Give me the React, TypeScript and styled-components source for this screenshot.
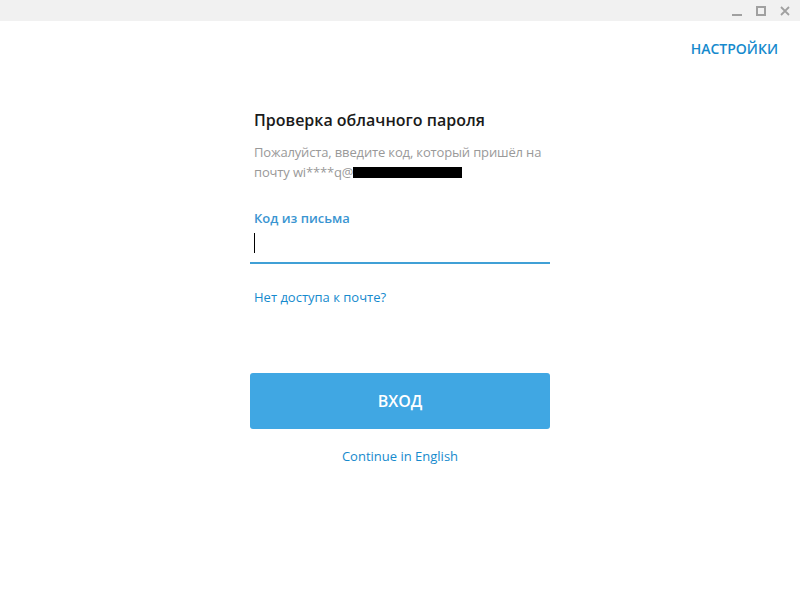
import React from "react";
import styled, { createGlobalStyle } from "styled-components";

const Global = createGlobalStyle`
  html, body {
    margin: 0;
    padding: 0;
    background: #ffffff;
  }
  body {
    font-family: "Open Sans", "Noto Sans", sans-serif;
  }
`;

function App() {
  return (
    <>
      <Global />
      <Window>
        <TitleBar>
          <WinButton aria-label="minimize">
            <svg width="12" height="12" viewBox="0 0 12 12">
              <rect x="1" y="9" width="10" height="2" fill="#a0a0a0" />
            </svg>
          </WinButton>
          <WinButton aria-label="maximize">
            <svg width="12" height="12" viewBox="0 0 12 12">
              <rect x="2" y="2" width="8" height="8" fill="none" stroke="#a0a0a0" strokeWidth="2" />
            </svg>
          </WinButton>
          <WinButton aria-label="close">
            <svg width="12" height="12" viewBox="0 0 12 12">
              <path d="M2 2 L10 10 M10 2 L2 10" stroke="#a0a0a0" strokeWidth="1.8" />
            </svg>
          </WinButton>
        </TitleBar>
        <TopBar>
          <SettingsLink>НАСТРОЙКИ</SettingsLink>
        </TopBar>
        <Form>
          <Title>Проверка облачного пароля</Title>
          <Description>
            Пожалуйста, введите код, который пришёл на
            <br />
            почту wi****q@<Redacted />
          </Description>
          <Field>
            <FieldLabel>Код из письма</FieldLabel>
            <InputRow>
              <Caret />
            </InputRow>
          </Field>
          <SmallLink>Нет доступа к почте?</SmallLink>
          <SubmitButton>ВХОД</SubmitButton>
          <LangLink>Continue in English</LangLink>
        </Form>
      </Window>
    </>
  );
}

export default App;

const Window = styled.div`
  width: 800px;
  height: 600px;
  display: flex;
  flex-direction: column;
  background: #ffffff;
  overflow: hidden;
`;

const TitleBar = styled.div`
  height: 21px;
  background: #f1f1f1;
  display: flex;
  justify-content: flex-end;
  align-items: center;
  padding-right: 3px;
`;

const WinButton = styled.div`
  width: 24px;
  height: 21px;
  display: flex;
  align-items: center;
  justify-content: center;
`;

const TopBar = styled.div`
  display: flex;
  justify-content: flex-end;
  padding: 18px 22px 0 0;
`;

const SettingsLink = styled.span`
  font-size: 14px;
  font-weight: 600;
  color: #168acd;
  line-height: 20px;
`;

const Form = styled.div`
  width: 300px;
  margin: 49px auto 0;
  display: flex;
  flex-direction: column;
`;

const Title = styled.div`
  font-size: 16px;
  font-weight: 600;
  color: #1a1a1a;
  padding-left: 4px;
  line-height: 24px;
`;

const Description = styled.div`
  margin-top: 10px;
  padding-left: 4px;
  font-size: 13px;
  letter-spacing: -0.15px;
  line-height: 20px;
  color: #999999;
`;

const Redacted = styled.span`
  display: inline-block;
  width: 109px;
  height: 11px;
  background: #000000;
  vertical-align: -1px;
`;

const Field = styled.div`
  margin-top: 27px;
  display: flex;
  flex-direction: column;
`;

const FieldLabel = styled.div`
  padding-left: 4px;
  font-size: 13px;
  font-weight: 600;
  color: #3a95d1;
  line-height: 18px;
`;

const InputRow = styled.div`
  height: 37px;
  padding: 6px 0 0 4px;
  box-sizing: border-box;
  border-bottom: 2px solid #40a0d6;
`;

const Caret = styled.div`
  width: 1px;
  height: 20px;
  background: #000000;
`;

const SmallLink = styled.div`
  margin-top: 24px;
  padding-left: 4px;
  font-size: 13px;
  line-height: 18px;
  color: #168acd;
`;

const SubmitButton = styled.div`
  margin-top: 67px;
  height: 56px;
  border-radius: 3px;
  background: #40a7e3;
  color: #ffffff;
  font-size: 16px;
  font-weight: 600;
  display: flex;
  align-items: center;
  justify-content: center;
`;

const LangLink = styled.div`
  margin-top: 18px;
  text-align: center;
  font-size: 13px;
  line-height: 18px;
  color: #168acd;
`;
